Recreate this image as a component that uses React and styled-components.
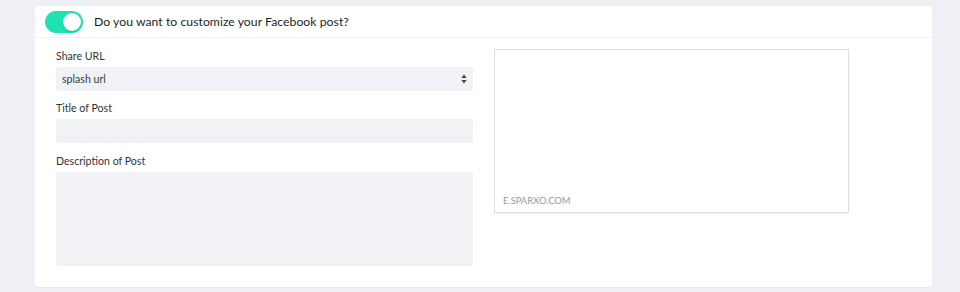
import styled, { createGlobalStyle } from "styled-components";

const GlobalStyle = createGlobalStyle`
  html, body {
    margin: 0;
    background: #eff0f5;
    font-family: Lato, "Open Sans", "Liberation Sans", sans-serif;
  }
`;

const Page = styled.div`
  padding: 6px 28px 6px 35px;
`;

const Card = styled.div`
  background: #ffffff;
  border-radius: 4px;
  box-shadow: 0 1px 1px rgba(0, 0, 0, 0.03);
`;

const Header = styled.div`
  display: flex;
  align-items: center;
  gap: 11px;
  height: 31px;
  padding-left: 10px;
  border-bottom: 1px solid #f1f2f5;
`;

const Toggle = styled.div`
  width: 38px;
  height: 22px;
  border-radius: 11px;
  background: #1fe2b2;
  display: flex;
  align-items: center;
  justify-content: ${(p) => (p.on ? "flex-end" : "flex-start")};
  padding: 0 2px;
  box-sizing: border-box;
`;

const Knob = styled.div`
  width: 18px;
  height: 18px;
  border-radius: 50%;
  background: #ffffff;
  box-shadow: 0 1px 2px rgba(0, 0, 0, 0.15);
`;

const Question = styled.span`
  font-size: 12.2px;
  color: #1e1e1e;
  letter-spacing: 0.05px;
`;

const Body = styled.div`
  display: flex;
  gap: 21px;
  padding: 10px 21px 21px 21px;
`;

const Fields = styled.div`
  width: 417px;
  display: flex;
  flex-direction: column;
`;

const Field = styled.div`
  display: flex;
  flex-direction: column;
  gap: 3px;
  margin-bottom: ${(p) => p.mb || 0}px;
`;

const Label = styled.label`
  font-size: 10.6px;
  line-height: 16px;
  color: #333;
`;

const Input = styled.div`
  height: ${(p) => p.h || 24}px;
  background: #f1f2f6;
  border-radius: 2px;
  display: flex;
  align-items: center;
  justify-content: space-between;
  padding: 0 6px;
  font-size: 10.6px;
  color: #3a3a3a;
`;

const Preview = styled.div`
  margin-top: 1px;
  width: 355px;
  height: 164px;
  border: 1px solid #dedede;
  display: flex;
  align-items: flex-end;
  padding: 0 8px 6px;
  box-sizing: border-box;
  box-shadow: 0 1px 1px rgba(0, 0, 0, 0.04);
`;

const Domain = styled.span`
  font-size: 9.4px;
  color: #9a9a9a;
`;

const Arrows = () => (
  <svg width="6" height="10" viewBox="0 0 6 10">
    <path d="M3 0.5 L5.6 4 H0.4 Z M3 9.5 L5.6 6 H0.4 Z" fill="#444" />
  </svg>
);

export default function App() {
  return (
    <Page>
      <GlobalStyle />
      <Card>
        <Header>
          <Toggle on>
            <Knob />
          </Toggle>
          <Question>Do you want to customize your Facebook post?</Question>
        </Header>
        <Body>
          <Fields>
            <Field mb={9}>
              <Label>Share URL</Label>
              <Input>
                <span>splash url</span>
                <Arrows />
              </Input>
            </Field>
            <Field mb={10}>
              <Label>Title of Post</Label>
              <Input />
            </Field>
            <Field>
              <Label>Description of Post</Label>
              <Input h={94} />
            </Field>
          </Fields>
          <Preview>
            <Domain>E.SPARXO.COM</Domain>
          </Preview>
        </Body>
      </Card>
    </Page>
  );
}
